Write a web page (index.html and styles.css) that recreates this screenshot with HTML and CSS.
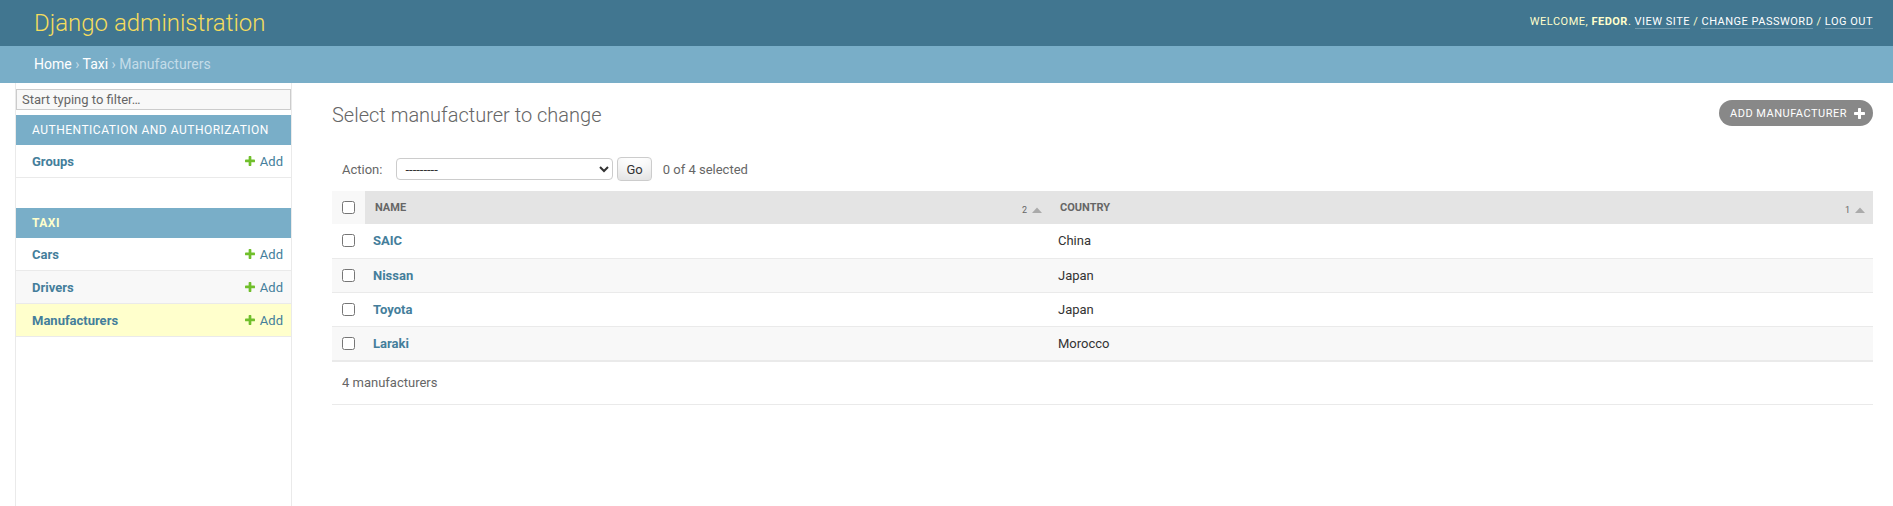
FILE: index.html
```html
<!DOCTYPE html>
<html lang="en">
<head>
<meta charset="utf-8">
<title>Select manufacturer to change | Django site admin</title>
<link rel="stylesheet" href="styles.css">
</head>
<body>
<header class="header">
  <h1 class="site-name"><a href="#">Django administration</a></h1>
  <div class="user-tools">Welcome, <strong>fedor</strong>. <a href="#">View site</a> / <a href="#">Change password</a> / <a href="#">Log out</a></div>
</header>
<nav class="breadcrumbs"><a href="#">Home</a> › <a href="#">Taxi</a> › Manufacturers</nav>
<div class="main">
  <div class="toggle"></div>
  <aside class="sidebar">
    <input class="nav-filter" type="text" placeholder="Start typing to filter…">
    <div class="module">
      <div class="caption">Authentication and Authorization</div>
      <div class="model-row"><a class="model-link" href="#">Groups</a><a class="addlink" href="#"><svg class="plus" viewBox="188 188 1416 1416"><path fill="#70bf2b" d="M1600 796v192q0 40-28 68t-68 28h-416v416q0 40-28 68t-68 28h-192q-40 0-68-28t-28-68v-416h-416q-40 0-68-28t-28-68v-192q0-40 28-68t68-28h416v-416q0-40 28-68t68-28h192q40 0 68 28t28 68v416h416q40 0 68 28t28 68z"/></svg>Add</a></div>
    </div>
    <div class="module">
      <div class="caption current-app">Taxi</div>
      <div class="model-row"><a class="model-link" href="#">Cars</a><a class="addlink" href="#"><svg class="plus" viewBox="188 188 1416 1416"><path fill="#70bf2b" d="M1600 796v192q0 40-28 68t-68 28h-416v416q0 40-28 68t-68 28h-192q-40 0-68-28t-28-68v-416h-416q-40 0-68-28t-28-68v-192q0-40 28-68t68-28h416v-416q0-40 28-68t68-28h192q40 0 68 28t28 68v416h416q40 0 68 28t28 68z"/></svg>Add</a></div>
      <div class="model-row alt"><a class="model-link" href="#">Drivers</a><a class="addlink" href="#"><svg class="plus" viewBox="188 188 1416 1416"><path fill="#70bf2b" d="M1600 796v192q0 40-28 68t-68 28h-416v416q0 40-28 68t-68 28h-192q-40 0-68-28t-28-68v-416h-416q-40 0-68-28t-28-68v-192q0-40 28-68t68-28h416v-416q0-40 28-68t68-28h192q40 0 68 28t28 68v416h416q40 0 68 28t28 68z"/></svg>Add</a></div>
      <div class="model-row current"><a class="model-link" href="#">Manufacturers</a><a class="addlink" href="#"><svg class="plus" viewBox="188 188 1416 1416"><path fill="#70bf2b" d="M1600 796v192q0 40-28 68t-68 28h-416v416q0 40-28 68t-68 28h-192q-40 0-68-28t-28-68v-416h-416q-40 0-68-28t-28-68v-192q0-40 28-68t68-28h416v-416q0-40 28-68t68-28h192q40 0 68 28t28 68v416h416q40 0 68 28t28 68z"/></svg>Add</a></div>
    </div>
  </aside>
  <main class="content">
    <div class="title-row">
      <h1 class="page-title">Select manufacturer to change</h1>
      <a class="add-btn" href="#">Add manufacturer<svg class="btn-plus" viewBox="188 188 1416 1416"><path fill="#ffffff" d="M1600 796v192q0 40-28 68t-68 28h-416v416q0 40-28 68t-68 28h-192q-40 0-68-28t-28-68v-416h-416q-40 0-68-28t-28-68v-192q0-40 28-68t68-28h416v-416q0-40 28-68t68-28h192q40 0 68 28t28 68v416h416q40 0 68 28t28 68z"/></svg></a>
    </div>
    <div class="actions">
      <label class="action-label">Action:</label>
      <select class="action-select"><option>---------</option><option>Delete selected manufacturers</option></select>
      <button class="go-btn" type="button">Go</button>
      <span class="action-counter">0 of 4 selected</span>
    </div>
    <table class="results">
      <colgroup><col class="c-check"><col class="c-name"><col></colgroup>
      <thead>
        <tr>
          <th class="th-check"><input type="checkbox" class="cb"></th>
          <th class="sorted"><div class="th-inner"><span>Name</span><span class="sortoptions"><span class="sortpriority">2</span><svg class="tri" viewBox="0 0 10 6"><polygon points="0,6 5,0.5 10,6" fill="#aaa"/></svg></span></div></th>
          <th class="sorted"><div class="th-inner"><span>Country</span><span class="sortoptions"><span class="sortpriority">1</span><svg class="tri" viewBox="0 0 10 6"><polygon points="0,6 5,0.5 10,6" fill="#aaa"/></svg></span></div></th>
        </tr>
      </thead>
      <tbody>
        <tr><td class="td-check"><input type="checkbox" class="cb"></td><th class="field-name"><a href="#">SAIC</a></th><td>China</td></tr>
        <tr class="row2"><td class="td-check"><input type="checkbox" class="cb"></td><th class="field-name"><a href="#">Nissan</a></th><td>Japan</td></tr>
        <tr><td class="td-check"><input type="checkbox" class="cb"></td><th class="field-name"><a href="#">Toyota</a></th><td>Japan</td></tr>
        <tr class="row2"><td class="td-check"><input type="checkbox" class="cb"></td><th class="field-name"><a href="#">Laraki</a></th><td>Morocco</td></tr>
      </tbody>
    </table>
    <p class="paginator">4 manufacturers</p>
  </main>
</div>
</body>
</html>
```
FILE: styles.css
```css
* { box-sizing: border-box; }
html, body { margin: 0; padding: 0; }
body {
  font-family: Roboto, "Liberation Sans", Arial, sans-serif;
  font-size: 14px;
  color: #333;
  background: #fff;
}
a { color: #447e9b; text-decoration: none; }

/* header */
.header {
  height: 46px;
  display: flex;
  justify-content: space-between;
  align-items: center;
  padding: 0 20px 0 34px;
  background: #417690;
  color: #ffc;
}
.site-name { margin: 0; font-size: 24px; font-weight: 300; line-height: 28px; }
.site-name a { color: #f5dd5d; }
.user-tools {
  font-size: 11px;
  letter-spacing: 0.5px;
  text-transform: uppercase;
  line-height: 14px;
  margin-bottom: 3px;
}
.user-tools strong { font-weight: 700; }
.user-tools a { color: #fff; border-bottom: 1px solid rgba(255,255,255,0.25); }

.breadcrumbs {
  height: 37px;
  line-height: 37px;
  padding: 0 34px;
  background: #79aec8;
  color: #c4dce8;
  font-size: 14px;
}
.breadcrumbs a { color: #fff; }

/* layout */
.main { display: flex; min-height: calc(100vh - 83px); }
.toggle { flex: 0 0 16px; border-right: 1px solid #eaeaea; }
.sidebar { flex: 0 0 276px; border-right: 1px solid #eaeaea; padding-top: 6px; }
.nav-filter {
  display: block;
  width: 100%;
  height: 21px;
  margin: 0 0 5px;
  padding: 2px 5px;
  border: 1px solid #ccc;
  background: #f8f8f8;
  color: #333;
  font-family: Roboto, "Liberation Sans", Arial, sans-serif;
  font-size: 13px;
  outline: none;
}
.nav-filter::placeholder { color: #666; }
.module { margin-bottom: 30px; }
.caption {
  height: 30px;
  line-height: 30px;
  padding: 0 16px;
  background: #79aec8;
  color: #fff;
  font-size: 12px;
  letter-spacing: 0.5px;
  text-transform: uppercase;
}
.caption.current-app { color: #ffc; font-weight: 700; }
.model-row {
  display: flex;
  justify-content: space-between;
  align-items: center;
  height: 33px;
  padding: 0 8px 0 16px;
  border-bottom: 1px solid #eaeaea;
  font-size: 13px;
}
.model-row.alt { background: #f8f8f8; }
.model-row.current { background: #ffc; }
.model-link { font-weight: 700; }
.addlink { display: flex; align-items: center; }
.plus { width: 10px; height: 10px; margin-right: 5px; }

/* content */
.content { flex: 1 1 auto; min-width: 0; padding: 20px 20px 20px 40px; }
.title-row { display: flex; justify-content: space-between; align-items: flex-start; margin-bottom: 20px; }
.page-title { margin: 0; font-size: 20px; font-weight: 300; line-height: 24px; color: #666; }
.add-btn {
  display: flex;
  align-items: center;
  height: 26px;
  margin-top: -3px;
  padding: 0 8px 0 11px;
  border-radius: 15px;
  background: #888;
  color: #fff;
  font-size: 11px;
  letter-spacing: 0.5px;
  text-transform: uppercase;
}
.btn-plus { width: 11px; height: 11px; margin-left: 7px; }

.actions {
  display: flex;
  align-items: center;
  height: 44px;
  padding: 0 10px;
  color: #666;
  font-size: 13px;
}
.action-select {
  width: 217px;
  height: 22px;
  margin: 0 0 0 14px;
  padding: 0 0 0 4px;
  border: 1px solid #ccc;
  border-radius: 4px;
  background: #fff;
  color: #333;
  font-family: Roboto, "Liberation Sans", Arial, sans-serif;
  font-size: 13px;
}
.go-btn {
  height: 24px;
  margin-left: 4px;
  padding: 0 8px;
  border: 1px solid #ccc;
  border-radius: 4px;
  background: #fff;
  box-shadow: 0 -15px 20px -10px rgba(0,0,0,0.15) inset;
  color: #333;
  font-family: Roboto, "Liberation Sans", Arial, sans-serif;
  font-size: 13px;
}
.action-counter { margin-left: 11px; }

.results { width: 100%; border-collapse: collapse; table-layout: fixed; font-size: 13px; }
.c-check { width: 33px; }
.c-name { width: 685px; }
.results thead th {
  height: 33px;
  padding: 0 8px 0 10px;
  background: #e4e4e4;
  color: #666;
  font-size: 11px;
  font-weight: 700;
  text-transform: uppercase;
  text-align: left;
}
.results thead th.th-check { background: #f8f8f8; padding: 0 0 0 10px; }
.th-inner { display: flex; justify-content: space-between; align-items: center; }
.sortoptions { display: flex; align-items: center; gap: 5px; margin-top: 5px; }
.sortpriority { font-size: 9px; font-weight: 400; color: #666; }
.tri { width: 10px; height: 6px; }
.cb { display: block; width: 13px; height: 13px; margin: 0; }

.results tbody td, .results tbody th {
  height: 34px;
  padding: 0 8px;
  border-bottom: 1px solid #eaeaea;
  text-align: left;
  font-weight: 400;
}
.results tbody td.td-check { padding: 0 0 0 10px; }
.results tbody th.field-name { font-weight: 700; }
.results tbody tr.row2 { background: #f8f8f8; }

.paginator {
  margin: 0;
  height: 44px;
  line-height: 42px;
  padding: 0 10px;
  border-top: 1px solid #eaeaea;
  border-bottom: 1px solid #eaeaea;
  color: #666;
  font-size: 13px;
}
```
